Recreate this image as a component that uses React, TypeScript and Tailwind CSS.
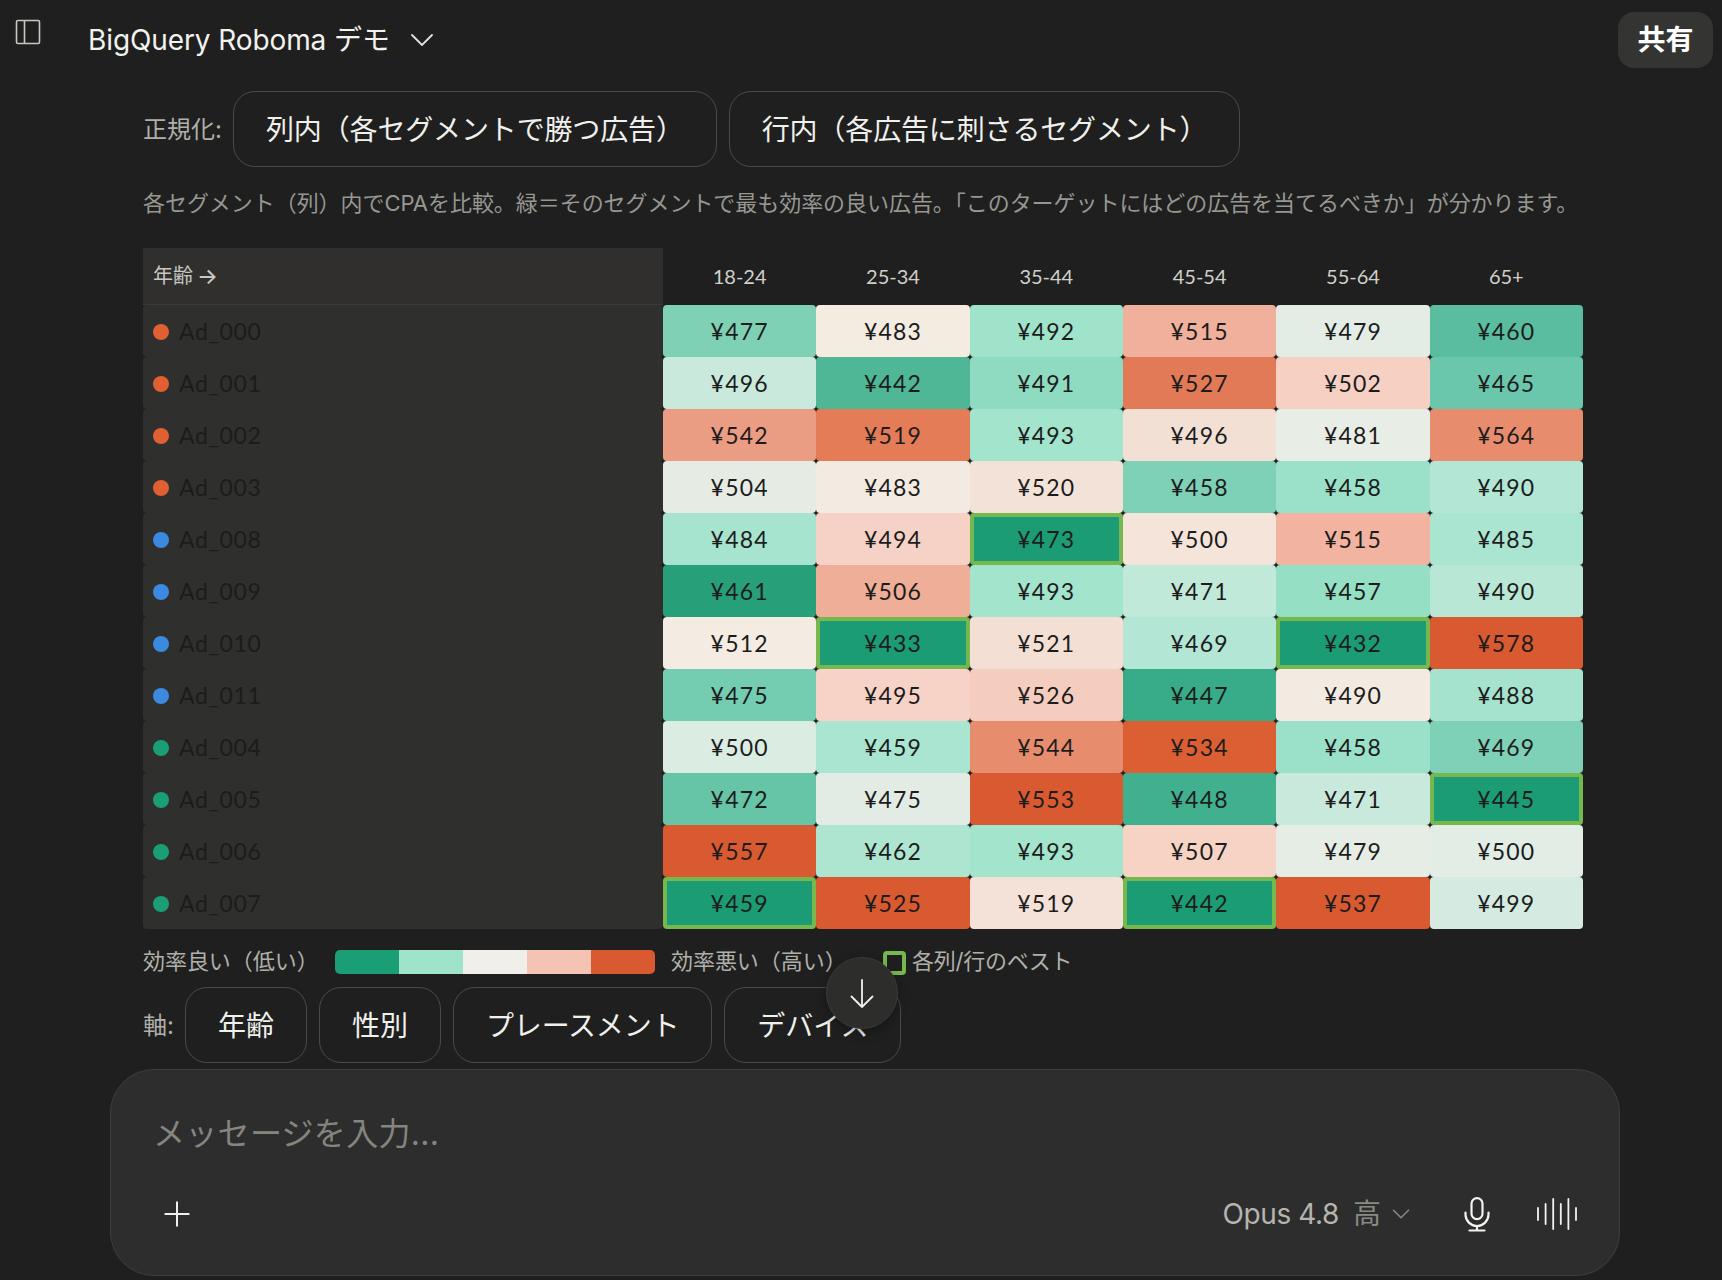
import { ChevronDown, Plus } from "lucide-react";

const O = "#e05f33";
const B = "#3b8ae0";
const G = "#1a9e75";

type Cell = [number, string];

const columns = ["18-24", "25-34", "35-44", "45-54", "55-64", "65+"];

const rows: { name: string; dot: string; cells: Cell[] }[] = [
  { name: "Ad_000", dot: O, cells: [[477, "#7fd1b6"], [483, "#f4ebe1"], [492, "#9fe3cb"], [515, "#f0b09b"], [479, "#e3ede5"], [460, "#5bbd9f"]] },
  { name: "Ad_001", dot: O, cells: [[496, "#c9e9dc"], [442, "#4fb796"], [491, "#8fdbc2"], [527, "#e27a58"], [502, "#f5d0c3"], [465, "#6bc7ab"]] },
  { name: "Ad_002", dot: O, cells: [[542, "#ea9d83"], [519, "#e47c58"], [493, "#a3e4cd"], [496, "#f3e0d5"], [481, "#e8ede6"], [564, "#e78d6e"]] },
  { name: "Ad_003", dot: O, cells: [[504, "#e6ebe4"], [483, "#f3ebe1"], [520, "#f3e2d8"], [458, "#7ed0b6"], [458, "#9be1c9"], [490, "#b3e6d4"]] },
  { name: "Ad_008", dot: B, cells: [[484, "#a7e4cf"], [494, "#f6d2c6"], [473, "best"], [500, "#f4e4d9"], [515, "#f2b3a0"], [485, "#aae5d1"]] },
  { name: "Ad_009", dot: B, cells: [[461, "#27a07a"], [506, "#efae98"], [493, "#a3e4cd"], [471, "#c1e9da"], [457, "#95dfc5"], [490, "#b9e7d6"]] },
  { name: "Ad_010", dot: B, cells: [[512, "#f4ebe2"], [433, "best"], [521, "#f4dfd5"], [469, "#b3e6d4"], [432, "best"], [578, "#d95a30"]] },
  { name: "Ad_011", dot: B, cells: [[475, "#74cdb1"], [495, "#f7d2c7"], [526, "#f5cdbf"], [447, "#38ab88"], [490, "#f3ebe1"], [488, "#a5e3ce"]] },
  { name: "Ad_004", dot: G, cells: [[500, "#dbece3"], [459, "#a9e5d0"], [544, "#e78d6d"], [534, "#dc5e33"], [458, "#9be1c9"], [469, "#7ed0b6"]] },
  { name: "Ad_005", dot: G, cells: [[472, "#66c5a7"], [475, "#e2ece4"], [553, "#d95a30"], [448, "#40b08e"], [471, "#c9e9dc"], [445, "best"]] },
  { name: "Ad_006", dot: G, cells: [[557, "#d95a30"], [462, "#ade5d1"], [493, "#a3e4cd"], [507, "#f7d3c6"], [479, "#e5ede5"], [500, "#e1ede5"]] },
  { name: "Ad_007", dot: G, cells: [[459, "best"], [525, "#d95a30"], [519, "#f4e1d8"], [442, "best"], [537, "#d95a30"], [499, "#d5ebe1"]] },
];

function PanelIcon() {
  return (
    <svg width="26" height="26" viewBox="0 0 26 26" fill="none" stroke="#c8c8c4" strokeWidth="1.6">
      <rect x="1.5" y="1.5" width="23" height="23" rx="1.5" />
      <path d="M9.5 1.5v23" />
    </svg>
  );
}

function TitleChevron() {
  return (
    <svg width="22" height="12" viewBox="0 0 22 12" fill="none" stroke="#e0e0dc" strokeWidth="1.8" strokeLinecap="round" strokeLinejoin="round">
      <path d="M1 1l10 10L21 1" />
    </svg>
  );
}

function MicIcon() {
  return (
    <svg width="26" height="35" viewBox="0 0 26 35" fill="none" stroke="#f2f2ee" strokeWidth="2.2" strokeLinecap="round">
      <rect x="7.5" y="1.2" width="11" height="21" rx="5.5" />
      <path d="M1.5 15.5v2a11.5 11.5 0 0 0 23 0v-2" />
      <path d="M13 29v4.5M5.5 33.5h15" />
    </svg>
  );
}

function WaveIcon() {
  return (
    <svg width="40" height="32" viewBox="0 0 40 32" fill="none" stroke="#f2f2ee" strokeWidth="1.8" strokeLinecap="round">
      <path d="M1 10v12M8.6 6v20M16.2 1v30M23.8 6v20M31.4 1v30M39 10v12" />
    </svg>
  );
}

function DownIcon() {
  return (
    <svg width="24" height="29" viewBox="0 0 24 29" fill="none" stroke="#f0f0ec" strokeWidth="1.8" strokeLinecap="round" strokeLinejoin="round">
      <path d="M12 1v27M1.5 17.5L12 28l10.5-10.5" />
    </svg>
  );
}

function ChipButton({ label, tracking }: { label: string; tracking: string }) {
  return (
    <button className={`h-[76px] rounded-[22px] border border-[#4a4a48] bg-[#1f1f1f] px-[32px] pt-[2px] text-[28px] text-[#f0f0ec] ${tracking}`}>
      {label}
    </button>
  );
}

function HeatCell({ value, color }: { value: number; color: string }) {
  if (color === "best") {
    return (
      <div className="flex items-center justify-center rounded-[4px] border-[4px] border-[#77b84e] bg-[#1b9c74] pt-[1px] font-['Lato',sans-serif] text-[23px] tracking-[1.2px] text-[#1c1c1c]">
        ¥{value}
      </div>
    );
  }
  return (
    <div
      className="flex items-center justify-center rounded-[4px] pt-[1px] font-['Lato',sans-serif] text-[23px] tracking-[1.2px] text-[#1c1c1c]"
      style={{ backgroundColor: color }}
    >
      ¥{value}
    </div>
  );
}

export default function App() {
  return (
    <div className="relative flex h-[1280px] w-[1722px] flex-col overflow-hidden bg-[#1f1f1f] font-['Inter','Noto_Sans_CJK_JP',sans-serif]">
      <header className="flex h-[80px] items-start justify-between pr-[9px]">
        <div className="flex items-start pl-[15px]">
          <div className="mt-[19px]">
            <PanelIcon />
          </div>
          <span className="ml-[47px] mt-[19px] w-[323px] text-[28px] leading-[42px] tracking-[-0.1px] text-[#f2f2ee]">BigQuery Roboma デモ</span>
          <div className="mt-[34px]">
            <TitleChevron />
          </div>
        </div>
        <button className="mt-[12px] h-[56px] w-[95px] rounded-[16px] bg-[#343433] text-[28px] font-semibold text-white">共有</button>
      </header>

      <div className="ml-[143px] mt-[11px] flex items-center">
        <span className="w-[90px] pt-[2px] text-[24px] text-[#b0b0aa]">正規化:</span>
        <div className="flex gap-[12px]">
          <ChipButton label="列内（各セグメントで勝つ広告）" tracking="tracking-[-0.15px]" />
          <ChipButton label="行内（各広告に刺さるセグメント）" tracking="tracking-[-0.15px]" />
        </div>
      </div>

      <p className="ml-[143px] mt-[20px] text-[22px] leading-[32px] tracking-[-0.05px] text-[#979792]">
        各セグメント（列）内でCPAを比較。緑＝そのセグメントで最も効率の良い広告。「このターゲットにはどの広告を当てるべきか」が分かります。
      </p>

      <div className="ml-[143px] mt-[29px] grid w-[1440px] grid-cols-[520px_repeat(6,minmax(0,1fr))] grid-rows-[57px_repeat(12,52px)]">
        <div className="flex items-center border-b border-[#3a3a38] bg-[#302f2d] pl-[10px] text-[20px] text-[#c8c8c2]">
          年齢<span className="ml-[4px] text-[22px] font-medium">→</span>
        </div>
        {columns.map((c) => (
          <div key={c} className="flex items-center justify-center pb-[1px] font-['Lato',sans-serif] text-[20px] text-[#d0d0ca]">
            {c}
          </div>
        ))}
        {rows.map((row) => (
          <div key={row.name} className="contents">
            <div className="flex items-center rounded-[4px] bg-[#2f2f2d] pl-[10px]">
              <span className="mt-[2px] h-[16px] w-[16px] rounded-full" style={{ backgroundColor: row.dot }} />
              <span className="ml-[10px] pt-[1px] font-['Lato',sans-serif] text-[23px] tracking-[0.6px] text-[#1c1c1c]">{row.name}</span>
            </div>
            {row.cells.map(([value, color], i) => (
              <HeatCell key={i} value={value} color={color} />
            ))}
          </div>
        ))}
      </div>

      <div className="ml-[143px] mt-[21px] flex h-[24px] items-center text-[22px] tracking-[-0.05px] text-[#b0b0aa]">
        <span className="w-[192px] pb-[2px]">効率良い（低い）</span>
        <div className="flex h-[24px] w-[320px] overflow-hidden rounded-[5px]">
          <div className="flex-1 bg-[#1a9e75]" />
          <div className="flex-1 bg-[#9fe3cb]" />
          <div className="flex-1 bg-[#f0efe9]" />
          <div className="flex-1 bg-[#f5c3b3]" />
          <div className="flex-1 bg-[#d95a30]" />
        </div>
        <span className="ml-[16px] w-[212px] pb-[2px]">効率悪い（高い）</span>
        <span className="mt-[2px] h-[24px] w-[23px] rounded-[4px] border-[4px] border-[#77b84e]" />
        <span className="ml-[6px] pb-[2px] tracking-[-0.25px]">各列/行のベスト</span>
      </div>

      <div className="ml-[143px] mt-[13px] flex items-center">
        <span className="w-[42px] pt-[2px] text-[24px] text-[#b0b0aa]">軸:</span>
        <div className="flex gap-[12px]">
          <ChipButton label="年齢" tracking="" />
          <ChipButton label="性別" tracking="" />
          <ChipButton label="プレースメント" tracking="tracking-[-0.2px]" />
          <ChipButton label="デバイス" tracking="" />
        </div>
      </div>

      <div className="ml-[110px] mt-[6px] flex h-[207px] w-[1510px] flex-col justify-between rounded-[44px] border border-[#3e3e3c] bg-[#2d2d2d] pb-[43px] pl-[42px] pr-[42px] pt-[44px]">
        <div className="text-[32px] leading-[40px] tracking-[0.3px] text-[#85857f]">メッセージを入力...</div>
        <div className="flex h-[36px] items-center justify-between">
          <Plus className="ml-[4px] h-[40px] w-[40px] text-[#f0f0ec]" strokeWidth={1.2} />
          <div className="flex items-center">
            <span className="text-[28px] tracking-[-0.4px] text-[#b5b5ae]">Opus 4.8</span>
            <span className="ml-[14px] text-[28px] text-[#8a8a84]">高</span>
            <ChevronDown className="ml-[5px] h-[30px] w-[30px] text-[#8a8a84]" strokeWidth={1.2} />
            <div className="ml-[48px]">
              <MicIcon />
            </div>
            <div className="ml-[47px]">
              <WaveIcon />
            </div>
          </div>
        </div>
      </div>

      <button className="absolute left-[826px] top-[957px] flex h-[72px] w-[72px] items-center justify-center rounded-full border border-[#3a3a38] bg-[#2d2d2b] shadow-[0_4px_12px_rgba(0,0,0,0.3)]">
        <DownIcon />
      </button>
    </div>
  );
}
